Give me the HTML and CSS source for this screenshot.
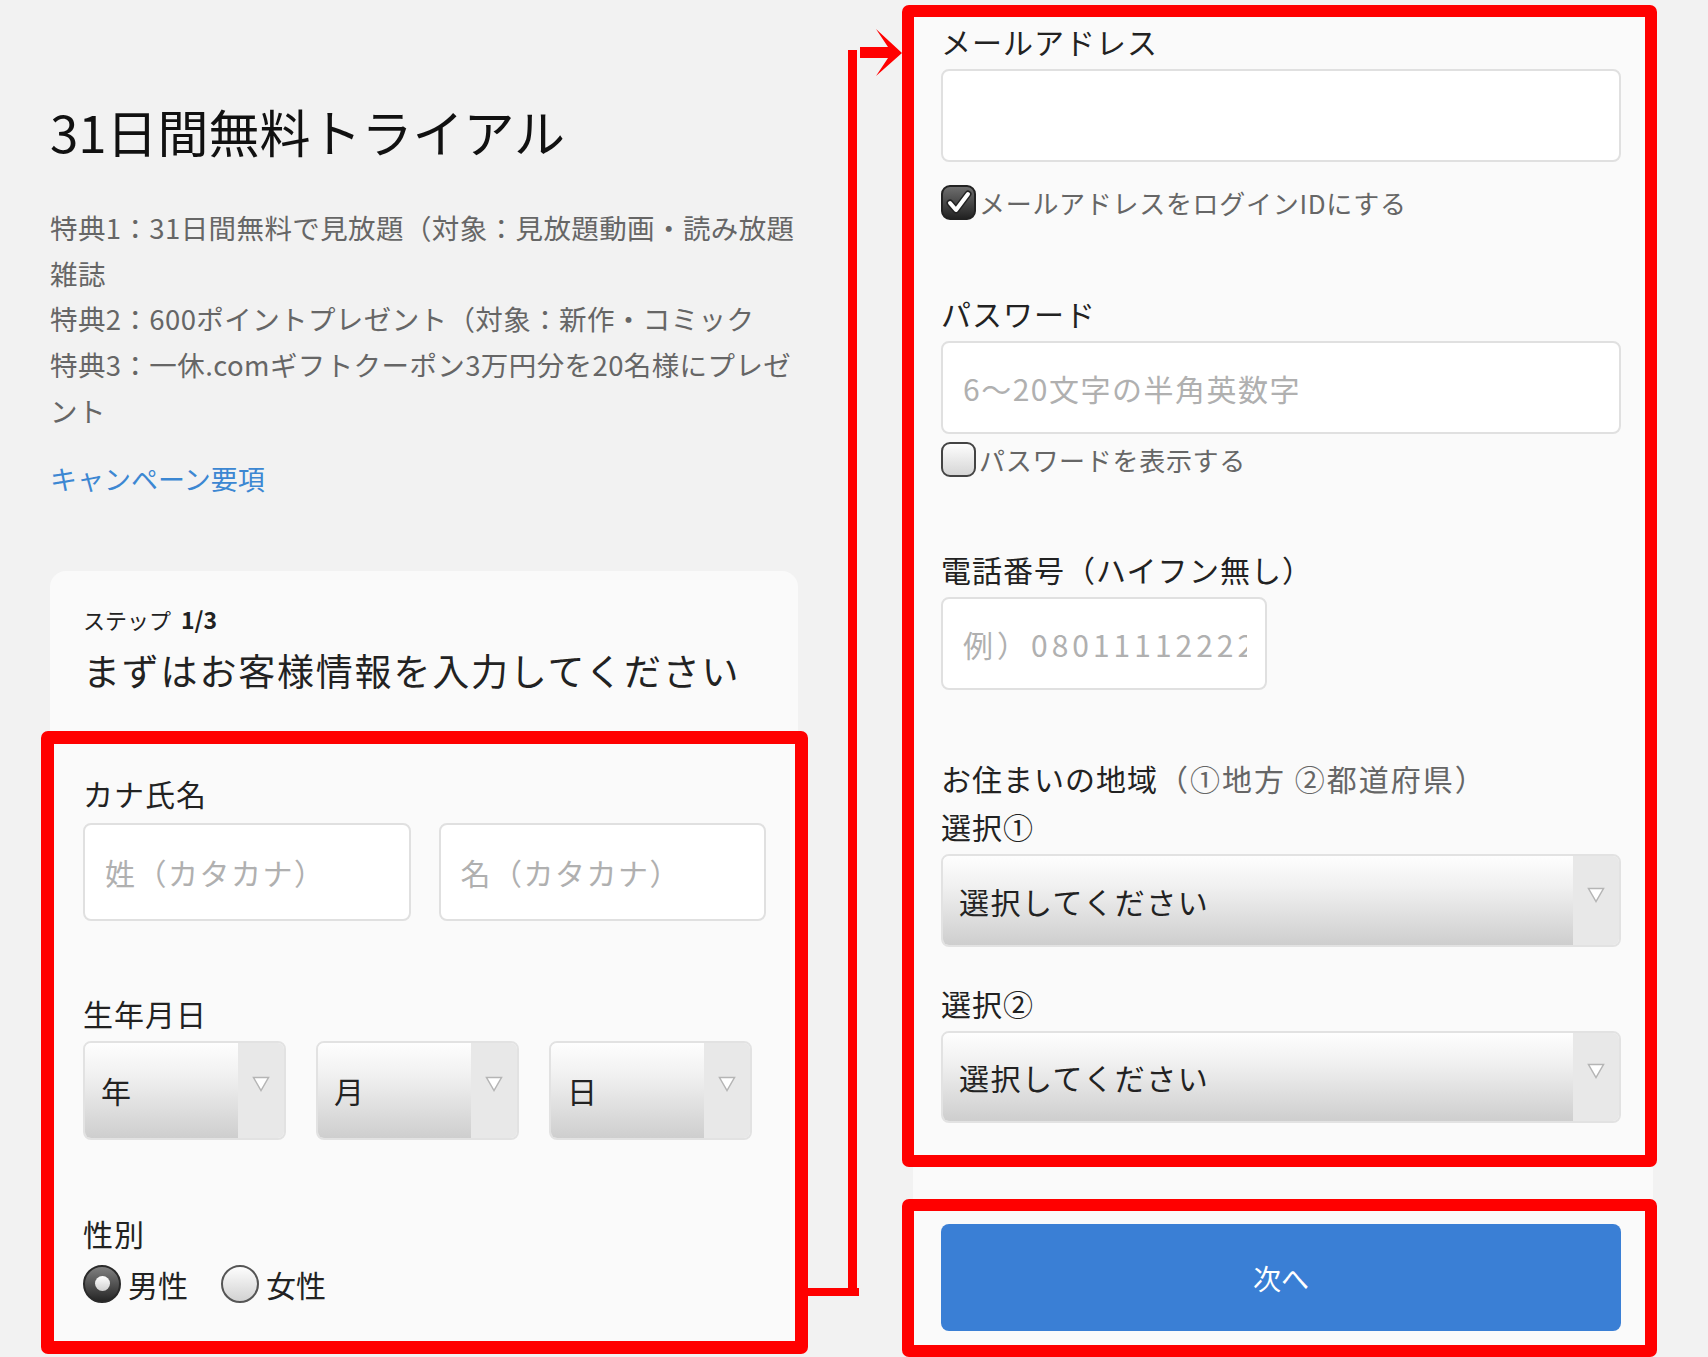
FILE: index.html
```html
<!DOCTYPE html>
<html lang="ja">
<head>
<meta charset="UTF-8">
<title>31日間無料トライアル</title>
<link rel="stylesheet" href="styles.css">
</head>
<body>
<div class="page">
  <div class="left">
    <h1 class="title">31日間無料トライアル</h1>
    <div class="perks">
      <p>特典1：31日間無料で見放題（対象：見放題動画・読み放題雑誌</p>
      <p>特典2：600ポイントプレゼント（対象：新作・コミック</p>
      <p>特典3：一休.comギフトクーポン3万円分を20名様にプレゼント</p>
    </div>
    <a class="campaignLink" href="#">キャンペーン要項</a>

    <div class="card">
      <div class="cardHead">
        <div class="step">ステップ<b>1/3</b></div>
        <h2 class="lead">まずはお客様情報を入力してください</h2>
      </div>

      <div class="mark markLeft">
        <div class="field">
          <div class="label">カナ氏名</div>
          <div class="nameRow">
            <input class="input" type="text" placeholder="姓（カタカナ）">
            <input class="input" type="text" placeholder="名（カタカナ）">
          </div>
        </div>

        <div class="field birthField">
          <div class="label">生年月日</div>
          <div class="birthRow">
            <div class="select selectSmall">
              <select><option>年</option></select>
              <span class="arrow"><svg width="18" height="16" viewBox="0 0 18 16"><path d="M1.5 1.5 H16.5 L9 14.5 Z" fill="#fff" stroke="#b5b5b5" stroke-width="1.5"/></svg></span>
            </div>
            <div class="select selectSmall">
              <select><option>月</option></select>
              <span class="arrow"><svg width="18" height="16" viewBox="0 0 18 16"><path d="M1.5 1.5 H16.5 L9 14.5 Z" fill="#fff" stroke="#b5b5b5" stroke-width="1.5"/></svg></span>
            </div>
            <div class="select selectSmall">
              <select><option>日</option></select>
              <span class="arrow"><svg width="18" height="16" viewBox="0 0 18 16"><path d="M1.5 1.5 H16.5 L9 14.5 Z" fill="#fff" stroke="#b5b5b5" stroke-width="1.5"/></svg></span>
            </div>
          </div>
        </div>

        <div class="field genderField">
          <div class="label">性別</div>
          <div class="genderRow">
            <label class="radioLabel"><span class="radio radioOn"></span>男性</label>
            <label class="radioLabel"><span class="radio"></span>女性</label>
          </div>
        </div>
      </div>
    </div>
  </div>

  <div class="right">
    <div class="card cardRight">
      <div class="mark markRight">
        <div class="field">
          <div class="label">メールアドレス</div>
          <input class="input inputMail" type="text">
          <label class="check checkMail">
            <span class="box boxOn"><svg width="31" height="31" viewBox="0 0 31 31"><path d="M7 16 L13 23 L25 7" fill="none" stroke="#222" stroke-width="7" stroke-linecap="round" stroke-linejoin="round"/><path d="M7 16 L13 23 L25 7" fill="none" stroke="#fff" stroke-width="4" stroke-linecap="round" stroke-linejoin="round"/></svg></span>メールアドレスをログインIDにする
          </label>
        </div>

        <div class="field passField">
          <div class="label">パスワード</div>
          <input class="input" type="password" placeholder="6〜20文字の半角英数字">
          <label class="check checkPass">
            <span class="box"></span>パスワードを表示する
          </label>
        </div>

        <div class="field telField">
          <div class="label">電話番号（ハイフン無し）</div>
          <input class="input inputTel" type="text" placeholder="例）080111122222">
        </div>

        <div class="field areaField">
          <div class="label">お住まいの地域<span class="labelSub">（①地方 ②都道府県）</span></div>
          <div class="label subLabel">選択①</div>
          <div class="select">
            <select><option>選択してください</option></select>
            <span class="arrow"><svg width="18" height="16" viewBox="0 0 18 16"><path d="M1.5 1.5 H16.5 L9 14.5 Z" fill="#fff" stroke="#b5b5b5" stroke-width="1.5"/></svg></span>
          </div>
          <div class="label subLabel subLabel2">選択②</div>
          <div class="select selectLast">
            <select><option>選択してください</option></select>
            <span class="arrow"><svg width="18" height="16" viewBox="0 0 18 16"><path d="M1.5 1.5 H16.5 L9 14.5 Z" fill="#fff" stroke="#b5b5b5" stroke-width="1.5"/></svg></span>
          </div>
        </div>
      </div>

      <div class="mark markButton">
        <button class="nextButton" type="button">次へ</button>
      </div>
    </div>
  </div>

  <!-- annotation arrow from left box to right box -->
  <svg class="connector" width="110" height="1290" viewBox="800 20 110 1290">
    <rect x="808" y="1288" width="51" height="8" fill="#f00"/>
    <rect x="848" y="50" width="9" height="1246" fill="#f00"/>
    <polygon points="876,29 902,53 876,76 888,58 860,58 860,47 888,47" fill="#f00"/>
  </svg>
</div>
</body>
</html>
```

FILE: styles.css
```css
body{
  margin: 0;
  background-color: #f2f2f2;
  font-family: "Noto Sans CJK JP", "Noto Sans", sans-serif;
  color: #222;
  overflow: hidden;
}
.page{
  position: relative;
  display: flex;
  align-items: flex-start;
  height: 1357px;
}
.left{
  width: 748px;
  padding: 95px 0 0 50px;
}
.title{
  margin: 0;
  font-size: 51px;
  line-height: 72px;
  font-weight: 400;
  color: #111;
}
.perks{
  margin-top: 38px;
  color: #666;
  font-size: 27.5px;
  line-height: 45.7px;
  letter-spacing: 0.4px;
}
.perks p{
  margin: 0;
}
.campaignLink{
  display: block;
  margin-top: 22px;
  font-size: 27px;
  line-height: 46px;
  color: #3c87d2;
  text-decoration: none;
}
.card{
  background-color: #fafafa;
  border-radius: 16px 16px 0 0;
}
.left .card{
  margin-top: 69px;
}
.cardHead{
  padding: 33px 33px 36px;
}
.step{
  font-size: 22px;
  line-height: 30px;
}
.step b{
  margin-left: 10px;
  font-size: 23px;
}
.lead{
  margin: 11px 0 0;
  font-size: 37px;
  line-height: 50px;
  font-weight: 400;
  letter-spacing: 1.8px;
}
.mark{
  border: 13px solid #f00;
  border-radius: 7px;
  background-color: #fafafa;
}
.markLeft{
  margin: 0 -10px 0 -9px;
  padding: 29px 29px 38px;
}
.label{
  font-size: 30px;
  line-height: 40px;
  letter-spacing: 1px;
}
.labelSub{
  color: #666;
  letter-spacing: 2px;
}
.input{
  display: block;
  box-sizing: border-box;
  width: 100%;
  height: 93px;
  margin-top: 8px;
  padding: 0 18px 0 20px;
  border: 2px solid #e0e0e0;
  border-radius: 8px;
  background-color: #fff;
  font-family: inherit;
  font-size: 30px;
  letter-spacing: 1.5px;
  color: #222;
  outline: none;
}
.input::placeholder{
  color: #b0b0b0;
}
.nameRow{
  display: flex;
  gap: 28px;
  margin-top: 10px;
}
.nameRow .input{
  flex: 1;
  height: 98px;
  margin-top: 0;
}
.birthField{
  margin-top: 72px;
}
.birthRow{
  display: flex;
  gap: 30px;
  margin-top: 8px;
}
.select{
  display: flex;
  box-sizing: border-box;
  height: 93px;
  margin-top: 8px;
  border: 2px solid #e2e2e2;
  border-radius: 8px;
  overflow: hidden;
}
.select select{
  flex: 1;
  min-width: 0;
  -webkit-appearance: none;
  appearance: none;
  border: 0;
  border-radius: 0;
  padding: 0 0 0 16px;
  background: linear-gradient(#fefefe, #f0f0f0 35%, #cecece);
  font-family: inherit;
  font-size: 30px;
  letter-spacing: 1.5px;
  color: #222;
  outline: none;
}
.select .arrow{
  display: flex;
  align-items: center;
  justify-content: center;
  width: 46px;
  background-color: #e8e8e8;
}
.select .arrow svg{
  margin-bottom: 12px;
}
.selectSmall{
  width: 203px;
  height: 99px;
  margin-top: 0;
}
.genderField{
  margin-top: 73px;
}
.genderRow{
  display: flex;
  align-items: center;
  margin-top: 12px;
  font-size: 30px;
  line-height: 38px;
}
.radioLabel{
  display: flex;
  align-items: center;
  gap: 7px;
}
.radioLabel + .radioLabel{
  margin-left: 33px;
}
.radio{
  display: flex;
  align-items: center;
  justify-content: center;
  box-sizing: border-box;
  width: 38px;
  height: 38px;
  border: 2px solid #555;
  border-radius: 50%;
  background: linear-gradient(#fdfdfd, #d2d2d2);
}
.radioOn{
  border-color: #2a2a2a;
  background: linear-gradient(#808080, #262626);
}
.radioOn::after{
  content: "";
  width: 15px;
  height: 15px;
  border-radius: 50%;
  background: linear-gradient(#fff, #cfcfcf);
}
.right{
  margin-left: 115px;
}
.cardRight{
  width: 740px;
  height: 1357px;
  border-radius: 0;
}
.markRight{
  margin: 5px -4px 0 -11px;
  padding: 4px 24px 32px 27px;
  border-width: 12px;
}
.markButton{
  margin: 32px -4px 0 -11px;
  padding: 13px 24px 14px 27px;
  border-width: 12px;
}
.check{
  display: flex;
  align-items: center;
  gap: 3px;
  height: 35px;
  margin-top: 23px;
  font-size: 26px;
  letter-spacing: 0.7px;
  color: #666;
}
.checkPass{
  margin-top: 8px;
}
.box{
  display: flex;
  align-items: center;
  justify-content: center;
  box-sizing: border-box;
  width: 35px;
  height: 35px;
  border: 2.5px solid #444;
  border-radius: 9px;
  background: linear-gradient(#fdfdfd, #d6d6d6);
}
.boxOn{
  border-color: #222;
  background: linear-gradient(#6e6e6e, #232323);
}
.passField{
  margin-top: 73px;
}
.telField{
  margin-top: 72px;
}
.inputTel{
  width: 326px;
  letter-spacing: 4px;
}
.areaField{
  margin-top: 68px;
}
.subLabel{
  margin-top: 8px;
}
.subLabel2{
  margin-top: 36px;
}
.selectLast{
  height: 92px;
}
.nextButton{
  display: block;
  width: 100%;
  height: 107px;
  border: 0;
  border-radius: 8px;
  background-color: #3a7fd5;
  color: #fff;
  font-family: inherit;
  font-size: 28px;
}
.connector{
  position: absolute;
  left: 800px;
  top: 20px;
}
```
